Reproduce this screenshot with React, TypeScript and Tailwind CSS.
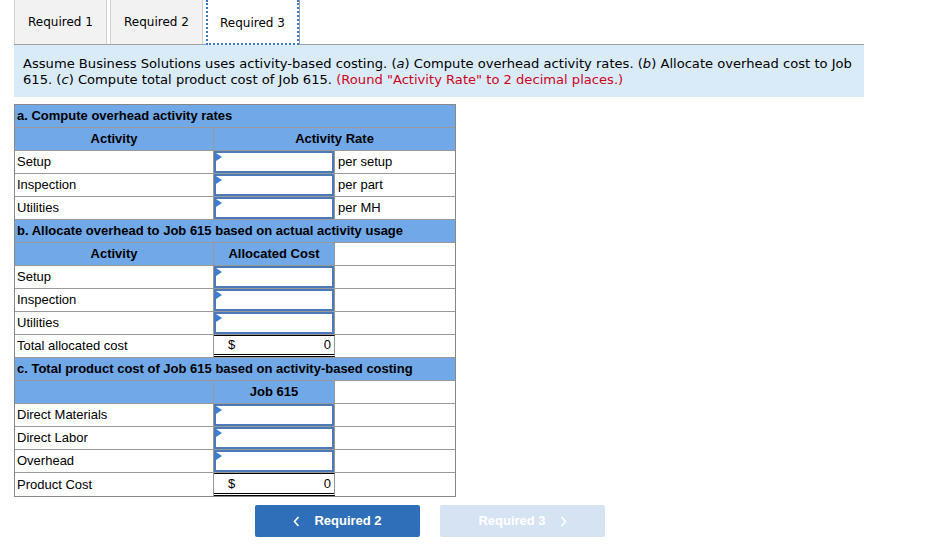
import React from "react";

const Tri = () => (
  <span className="absolute left-0 top-0 w-0 h-0 border-t-[4px] border-b-[4px] border-l-[6px] border-t-transparent border-b-transparent border-l-[#3a7fd5]" />
);

const InputCell = () => (
  <div className="relative w-[121px] h-full border-r border-[#999] p-0">
    <div className="relative w-full h-full border-2 border-[#4b7ab8] bg-white">
      <Tri />
    </div>
  </div>
);

const TotalCell = () => (
  <div className="w-[121px] h-full border-r border-[#999] flex items-center justify-between pl-[14px] pr-[3px] border-t border-t-black border-b-[3px] border-b-black border-double">
    <span>$</span>
    <span>0</span>
  </div>
);

const Row = ({ label, children, last }: { label: string; children?: React.ReactNode; last?: boolean }) => (
  <div className={"flex h-[23px] " + (last ? "" : "border-b border-[#999]")}>
    <div className="w-[199px] border-r border-[#999] flex items-center pl-[2px]">{label}</div>
    {children}
  </div>
);

const Title = ({ text }: { text: string }) => (
  <div className="h-[23px] bg-[#70a8e8] border-b border-[#999] flex items-center pl-[2px] font-bold text-[13px]">{text}</div>
);

const Chevron = ({ dir }: { dir: "l" | "r" }) => (
  <svg width="7" height="11" viewBox="0 0 7 11" fill="none">
    <path d={dir === "l" ? "M5.5 1 L1.5 5.5 L5.5 10" : "M1.5 1 L5.5 5.5 L1.5 10"} stroke="white" strokeWidth="1.6" />
  </svg>
);

export default function App() {
  return (
    <div className="w-[948px] h-[551px] bg-white pl-[14px] pt-0 text-black" style={{ fontFamily: "'Liberation Sans', Arial, sans-serif" }}>
      {/* Tabs */}
      <div className="flex w-[850px] h-[45px] border-b border-[#a0a0a0] gap-[3px]" style={{ fontFamily: "'DejaVu Sans', Verdana, sans-serif" }}>
        <div className="w-[93px] h-[44px] bg-[#f2f2f2] border-l border-r border-[#d0d0d0] flex items-center justify-center text-[12px]">Required 1</div>
        <div className="w-[93px] h-[44px] bg-[#f2f2f2] border-l border-r border-[#d0d0d0] flex items-center justify-center text-[12px]">Required 2</div>
        <div className="w-[94px] h-[45px] bg-white border-r border-[#a0a0a0] -mb-px relative flex items-center justify-center text-[12px]">
          <div className="absolute inset-0 border-2 border-dotted border-[#3a78c8] border-t-0" />
          Required 3
        </div>
      </div>
      {/* Instructions */}
      <div className="w-[850px] h-[52px] bg-[#d9ebf9] pl-[9px] pr-0 pt-[11px] text-[13.1px] leading-[16px]" style={{ fontFamily: "'DejaVu Sans', Verdana, sans-serif" }}>
        Assume Business Solutions uses activity-based costing. (<i>a</i>) Compute overhead activity rates. (<i>b</i>) Allocate overhead cost to Job 615. (<i>c</i>) Compute total product cost of Job 615.{" "}
        <span className="text-[#d0021b]">(Round "Activity Rate" to 2 decimal places.)</span>
      </div>

      {/* Table */}
      <div className="mt-[7px] w-[442px] border border-[#888] text-[13px]">
        <Title text="a. Compute overhead activity rates" />
        <div className="flex h-[23px] bg-[#70a8e8] border-b border-[#999] font-bold text-[13px]">
          <div className="w-[199px] border-r border-[#999] flex items-center justify-center">Activity</div>
          <div className="flex-1 flex items-center justify-center">Activity Rate</div>
        </div>
        {[["Setup", "per setup"], ["Inspection", "per part"], ["Utilities", "per MH"]].map(([a, b]) => (
          <Row key={a} label={a}>
            <InputCell />
            <div className="flex-1 flex items-center pl-[3px]">{b}</div>
          </Row>
        ))}
        <Title text="b. Allocate overhead to Job 615 based on actual activity usage" />
        <div className="flex h-[23px] border-b border-[#999] font-bold text-[13px]">
          <div className="w-[199px] bg-[#70a8e8] border-r border-[#999] flex items-center justify-center">Activity</div>
          <div className="w-[121px] bg-[#70a8e8] border-r border-[#999] flex items-center justify-center">Allocated Cost</div>
          <div className="flex-1 bg-white" />
        </div>
        {["Setup", "Inspection", "Utilities"].map((a) => (
          <Row key={a} label={a}>
            <InputCell />
            <div className="flex-1" />
          </Row>
        ))}
        <Row label="Total allocated cost">
          <TotalCell />
          <div className="flex-1" />
        </Row>
        <Title text="c. Total product cost of Job 615 based on activity-based costing" />
        <div className="flex h-[23px] border-b border-[#999] font-bold text-[13px]">
          <div className="w-[199px] bg-[#70a8e8] border-r border-[#999]" />
          <div className="w-[121px] bg-[#70a8e8] border-r border-[#999] flex items-center justify-center">Job 615</div>
          <div className="flex-1 bg-white" />
        </div>
        {["Direct Materials", "Direct Labor", "Overhead"].map((a) => (
          <Row key={a} label={a}>
            <InputCell />
            <div className="flex-1" />
          </Row>
        ))}
        <Row label="Product Cost" last>
          <TotalCell />
          <div className="flex-1" />
        </Row>
      </div>

      {/* Buttons */}
      <div className="flex gap-[20px] ml-[241px] mt-[8px]">
        <div className="w-[165px] h-[32px] rounded-[2px] bg-[#2f6fba] text-white font-bold text-[13px] flex items-center justify-center gap-[14px]">
          <Chevron dir="l" />
          <span>Required 2</span>
        </div>
        <div className="w-[165px] h-[32px] rounded-[2px] bg-[#d6e3f3] text-white font-bold text-[13px] flex items-center justify-center gap-[14px]">
          <span>Required 3</span>
          <Chevron dir="r" />
        </div>
      </div>
    </div>
  );
}
